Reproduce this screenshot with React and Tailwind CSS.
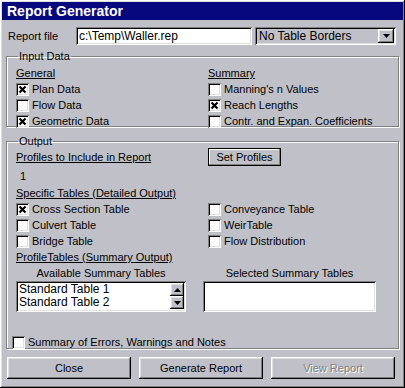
import React from "react";

const face = "bg-[#c0c0c8]";
const raised =
  "shadow-[inset_-1px_-1px_#000,inset_1px_1px_#fff,inset_-2px_-2px_#808080,inset_2px_2px_#dfdfdf]";
const sunken =
  "shadow-[inset_1px_1px_#808080,inset_-1px_-1px_#fff,inset_2px_2px_#000,inset_-2px_-2px_#dfdfdf]";

function CheckBox({ label, checked }) {
  return (
    <div className="flex h-[16px] items-center">
      <div className={`relative h-[13px] w-[13px] shrink-0 bg-white ${sunken}`}>
        {checked ? (
          <svg viewBox="0 0 13 13" className="absolute inset-0 h-[13px] w-[13px]">
            <path d="M3.5 3.5 L9.5 9.5 M9.5 3.5 L3.5 9.5" stroke="#000" strokeWidth="2.2" />
          </svg>
        ) : null}
      </div>
      <span className="ml-[3px] whitespace-nowrap">{label}</span>
    </div>
  );
}

function Heading({ children, className = "" }) {
  return <div className={`h-[16px] leading-[16px] underline ${className}`}>{children}</div>;
}

function ScrollBtn({ up }) {
  return (
    <div className={`flex h-[13px] w-[14px] items-center justify-center ${face} ${raised}`}>
      <svg viewBox="0 0 7 4" className="h-[4px] w-[7px]">
        <path d={up ? "M3.5 0 L7 4 L0 4 Z" : "M0 0 L7 0 L3.5 4 Z"} fill="#000" />
      </svg>
    </div>
  );
}

function Button({ children, disabled }) {
  return (
    <div className={`flex h-[22px] w-[124px] items-center justify-center ${raised}`}>
      {disabled ? (
        <span className="text-[#808080] [text-shadow:1px_1px_#fff]">{children}</span>
      ) : (
        children
      )}
    </div>
  );
}

export default function App() {
  return (
    <div
      className={`h-[388px] w-[405px] overflow-hidden p-[2px] text-[11px] leading-[13px] text-black ${face} ${raised}`}
      style={{ fontFamily: '"Liberation Sans", Arial, sans-serif' }}
    >
      <div className="flex h-[18px] items-center bg-[#08087e] pl-[5px] text-[14px] font-bold text-white">
        Report Generator
      </div>

      <div className="mt-[7px] flex h-[18px] items-center">
        <span className="ml-[6px] w-[68px]">Report file</span>
        <div className={`flex h-[18px] w-[176px] items-center bg-white pl-[3px] text-[12px] ${sunken}`}>
          c:\Temp\Waller.rep
        </div>
        <div className={`ml-[3px] flex h-[18px] w-[141px] items-center justify-between bg-[#c0c0c8] pl-[4px] pr-[2px] text-[12px] ${sunken}`}>
          <span>No Table Borders</span>
          <div className={`flex h-[14px] w-[16px] items-center justify-center ${raised} ${face}`}>
            <svg viewBox="0 0 7 4" className="h-[4px] w-[7px]">
              <path d="M0 0 L7 0 L3.5 4 Z" fill="#000" />
            </svg>
          </div>
        </div>
      </div>

      <fieldset className="mx-[4px] mt-[5px] h-[77px] border border-[#808080] pl-[9px] shadow-[inset_1px_1px_#fff,1px_1px_#fff]">
        <legend className="ml-[2px] px-[1px] leading-[13px]">Input Data</legend>
        <div className="flex pt-[2px]">
          <div className="w-[192px]">
            <Heading>General</Heading>
            <CheckBox label="Plan Data" checked />
            <CheckBox label="Flow Data" />
            <CheckBox label="Geometric Data" checked />
          </div>
          <div>
            <Heading>Summary</Heading>
            <CheckBox label="Manning's n Values" />
            <CheckBox label="Reach Lengths" checked />
            <CheckBox label="Contr. and Expan. Coefficients" />
          </div>
        </div>
      </fieldset>

      <fieldset className="mx-[4px] mt-[8px] h-[214px] border border-[#808080] pl-[9px] shadow-[inset_1px_1px_#fff,1px_1px_#fff]">
        <legend className="ml-[2px] px-[1px] leading-[13px]">Output</legend>
        <div className="flex items-center">
          <Heading className="w-[192px]">Profiles to Include in Report</Heading>
          <div className="flex h-[18px] w-[73px] items-center justify-center border border-black shadow-[inset_-1px_-1px_#808080,inset_1px_1px_#fff]">
            Set Profiles
          </div>
        </div>
        <div className="mt-[2px] h-[17px] pl-[4px] leading-[17px]">1</div>
        <Heading>Specific Tables (Detailed Output)</Heading>
        <div className="flex">
          <div className="w-[192px]">
            <CheckBox label="Cross Section Table" checked />
            <CheckBox label="Culvert Table" />
            <CheckBox label="Bridge Table" />
          </div>
          <div>
            <CheckBox label="Conveyance Table" />
            <CheckBox label="WeirTable" />
            <CheckBox label="Flow Distribution" />
          </div>
        </div>
        <Heading>ProfileTables (Summary Output)</Heading>
        <div className="flex gap-[17px]">
          <div className="w-[170px]">
            <div className="h-[16px] text-center leading-[16px]">Available Summary Tables</div>
            <div className={`flex h-[31px] bg-white p-[2px] ${sunken}`}>
              <div className="flex-1 pl-[1px] text-[12px] leading-[13px]">
                <div>Standard Table 1</div>
                <div>Standard Table 2</div>
              </div>
              <div className="flex flex-col">
                <ScrollBtn up />
                <ScrollBtn />
              </div>
            </div>
          </div>
          <div className="w-[173px]">
            <div className="h-[16px] text-center leading-[16px]">Selected Summary Tables</div>
            <div className={`h-[31px] bg-white ${sunken}`} />
          </div>
        </div>
        <div className="-ml-[4px] mt-[22px]">
          <CheckBox label="Summary of Errors, Warnings and Notes" />
        </div>
      </fieldset>

      <div className="ml-[5px] mt-[8px] flex gap-[8px]">
        <Button>Close</Button>
        <Button>Generate Report</Button>
        <Button disabled>View Report</Button>
      </div>
    </div>
  );
}
